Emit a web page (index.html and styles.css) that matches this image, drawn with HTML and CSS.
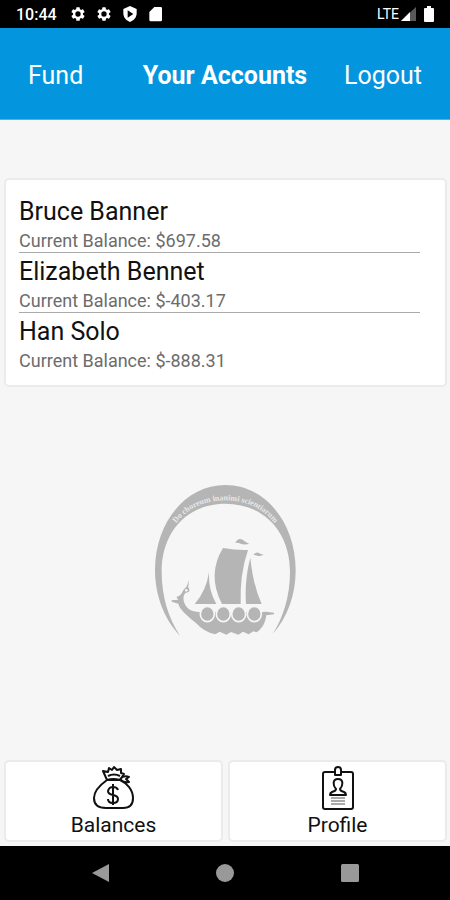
FILE: index.html
```html
<!DOCTYPE html>
<html lang="en">
<head>
<meta charset="utf-8">
<meta name="viewport" content="width=device-width, initial-scale=1">
<title>Your Accounts</title>
<link rel="stylesheet" href="styles.css">
</head>
<body>
<div class="statusbar">
  <span class="clock">10:44</span>
  <svg class="status-icon" viewBox="0 0 24 24"><path fill-rule="evenodd" d="M19.4 13a7.500 7.500 0 0 0 0-2l2.200-1.700a.5.5 0 0 0 .1-.7l-2-3.400a.5.5 0 0 0-.6-.2l-2.500 1a7.600 7.600 0 0 0-1.700-1l-.4-2.600a.5.5 0 0 0-.5-.4h-4a.5.5 0 0 0-.5.400L9.100 5a7.600 7.600 0 0 0-1.700 1l-2.500-1a.5.5 0 0 0-.6.200l-2 3.400a.5.5 0 0 0 .1.700L4.600 11a7.500 7.500 0 0 0 0 2l-2.200 1.700a.5.5 0 0 0-.1.700l2 3.400c.1.200.4.300.6.200l2.500-1a7.600 7.600 0 0 0 1.700 1l.4 2.600c0 .2.200.4.5.4h4c.3 0 .5-.2.500-.4l.4-2.600a7.600 7.600 0 0 0 1.700-1l2.500 1c.2.100.5 0 .6-.2l2-3.400a.5.5 0 0 0-.1-.7zM12 8a4 4 0 1 1 0 8 4 4 0 0 1 0-8z"/></svg>
  <svg class="status-icon" viewBox="0 0 24 24"><path fill-rule="evenodd" d="M19.4 13a7.500 7.500 0 0 0 0-2l2.200-1.700a.5.5 0 0 0 .1-.7l-2-3.400a.5.5 0 0 0-.6-.2l-2.500 1a7.600 7.600 0 0 0-1.700-1l-.4-2.600a.5.5 0 0 0-.5-.4h-4a.5.5 0 0 0-.5.400L9.100 5a7.600 7.600 0 0 0-1.700 1l-2.500-1a.5.5 0 0 0-.6.200l-2 3.400a.5.5 0 0 0 .1.700L4.600 11a7.500 7.500 0 0 0 0 2l-2.200 1.700a.5.5 0 0 0-.1.700l2 3.400c.1.200.4.300.6.200l2.500-1a7.600 7.600 0 0 0 1.700 1l.4 2.600c0 .2.200.4.5.4h4c.3 0 .5-.2.500-.4l.4-2.600a7.600 7.600 0 0 0 1.700-1l2.500 1c.2.100.5 0 .6-.2l2-3.400a.5.5 0 0 0-.1-.7zM12 8a4 4 0 1 1 0 8 4 4 0 0 1 0-8z"/></svg>
  <svg class="status-icon" viewBox="0 0 24 24"><path fill-rule="evenodd" d="M12 0 2 4.500V11c0 6 4.200 11 10 13 5.800-2 10-7 10-13V4.500zM8.500 6.500 17 12l-8.500 5.500z"/></svg>
  <svg class="status-icon" viewBox="0 0 24 24"><path d="M9.500 1.500H19a2 2 0 0 1 2 2V21a2 2 0 0 1-2 2H4a2 2 0 0 1-2-2V9z"/></svg>
  <span class="network">LTE</span>
  <svg class="signal" viewBox="0 0 15 14"><path d="M15 0v14H0z" opacity=".35"/><path d="M9 5v9H0z"/></svg>
  <svg class="battery" viewBox="0 0 10 16"><path d="M3 0h4v2h2a1 1 0 0 1 1 1v12a1 1 0 0 1-1 1H1a1 1 0 0 1-1-1V3a1 1 0 0 1 1-1h2z"/></svg>
</div>
<header class="topbar">
  <button class="topbar-button" type="button">Fund</button>
  <h1 class="title">Your Accounts</h1>
  <button class="topbar-button" type="button">Logout</button>
</header>
<main class="content">
  <ul class="panel accounts">
    <li class="account"><h2 class="name">Bruce Banner</h2><p class="balance">Current Balance: $697.58</p></li>
    <li class="account"><h2 class="name">Elizabeth Bennet</h2><p class="balance">Current Balance: $-403.17</p></li>
    <li class="account"><h2 class="name">Han Solo</h2><p class="balance">Current Balance: $-888.31</p></li>
  </ul>
  <div class="brand">
    <svg class="emblem" viewBox="0 0 480 510" role="img" aria-label="Viking ship emblem">
      <path d="M105 482C57 432 30 360 30 285 30 145 120 30 241 30s211 115 211 255c0 75-24 142-69 192 32-50 52-115 52-187 0-120-80-204-194-204S50 170 50 290c0 75 21 140 55 192z"/>
      <path id="motto-arc" fill="none" d="M75 174C106 114 162 76 241 76s135 38 166 98"/>
      <text class="motto" text-anchor="middle"><textPath href="#motto-arc" startOffset="50%">Do choreum inanimi scientiarum</textPath></text>
      <path d="M234 219q38 7 75 6-25 72-22 162h-56q-46-88 3-168z"/>
      <path d="M192 290q-3 54 22 97h-65q36-42 43-97zM316 248q8 82 34 139h-47q-5-72 13-139z"/>
      <path d="M271 204q8-18 23-9 9 8 19 12-18 3-26-1-8-4-16-2zM325 240q10-12 18-5 6 4 13 4-13 6-19 3-6-3-12-2z"/>
      <path d="M129 315Q133 328 129 336Q135 341 132 350L121 354C111 366 115 386 127 398Q138 409 160 411H350L364 410 387 413V418L364 421C361 444 352 460 335 472L325 469 311 478 294 470 280 479 258 471 244 479 224 470 211 478Q178 472 153 444C124 420 103 402 100 386L80 380V376L100 374 94 366Q110 361 113 349 118 340 124 336 130 328 129 315z"/>
      <circle class="light" cx="124" cy="346" r="4"/>
      <g class="shield"><ellipse cx="187" cy="417" rx="21" ry="23"/><ellipse cx="235" cy="417" rx="21" ry="23"/><ellipse cx="281" cy="417" rx="21" ry="23"/><ellipse cx="328" cy="417" rx="21" ry="23"/></g>
    </svg>
  </div>
</main>
<nav class="tabs" aria-label="Sections">
  <button class="panel tab" type="button">
    <svg class="tab-icon" viewBox="0 0 44 46"><path d="M15 15C8 20 2 26 2 33c0 7 5 10 12 10h17c7 0 10-4 10-10 0-8-6-15-13-18zM15 15l-4-9 5 1 1-4 3 2 2-3 3 3 4-1v4l3 1-4 6M16 11q6-3 12 0M15 15q6-2 13 0M28 14q4-4 9-2l-3 2 3 3q-5 1-8-2"/><path d="M26 25q-1-3-5-3t-5 4q0 3 5 4t5 4q0 4-5 4t-5-4M21 19v21"/></svg>
    <span>Balances</span>
  </button>
  <button class="panel tab" type="button">
    <svg class="tab-icon" viewBox="0 0 44 46"><path d="M19 7H9a2 2 0 0 0-2 2v33a2 2 0 0 0 2 2h26a2 2 0 0 0 2-2V9a2 2 0 0 0-2-2H25M19 10V5a3 3 0 0 1 6 0v5z"/><path d="M20 24c-3-3-4-10 2-10s5 7 2 10q0 2 4 3 2 1 2 3H14q0-2 2-3 4-1 4-3z"/><path class="fine" d="M15 33h14M15 36h14M15 39h14"/></svg>
    <span>Profile</span>
  </button>
</nav>
<div class="system-nav">
  <button type="button" aria-label="Back"><svg viewBox="0 0 20 20"><path d="M2 10 19 1v18z"/></svg></button>
  <button type="button" aria-label="Home"><svg viewBox="0 0 20 20"><circle cx="10" cy="10" r="9"/></svg></button>
  <button type="button" aria-label="Recent apps"><svg viewBox="0 0 20 20"><rect x="1" y="1" width="18" height="18" rx="1.500"/></svg></button>
</div>
</body>
</html>
```
FILE: styles.css
```css
* { box-sizing: border-box; }
body {
  margin: 0;
  min-height: 100vh;
  display: flex;
  flex-direction: column;
  background: #f6f6f6;
  color: #111;
  font-family: Roboto, sans-serif;
}
h1, h2, p, ul { margin: 0; padding: 0; }
button { font: inherit; color: inherit; border: 0; background: none; padding: 0; }

.statusbar {
  display: flex;
  align-items: center;
  gap: 10px;
  height: 28px;
  padding: 0 16px;
  background: #000;
  color: #fff;
  fill: #fff;
}
.clock { font-size: 16px; font-weight: 500; margin-right: 3px; }
.status-icon { width: 16px; height: 16px; }
.network { margin-left: auto; font-size: 14px; }
.signal { width: 15px; height: 14px; margin-left: -8px; }
.battery { width: 10px; height: 16px; margin-left: -2px; }

.topbar {
  display: grid;
  grid-template-columns: 1fr auto 1fr;
  align-items: center;
  height: 92px;
  padding: 4px 28px 0;
  background: #0396de;
  border-bottom: 1px solid #4eb2e3;
  color: #fff;
}
.topbar-button { font-size: 25px; justify-self: start; }
.topbar-button:last-child { justify-self: end; }
.title { font-size: 25px; font-weight: 700; }

.content { flex: 1; display: flex; flex-direction: column; }
.panel {
  background: #fff;
  border: 2px solid #ebebeb;
  border-radius: 5px;
}
.accounts {
  list-style: none;
  margin: 58px 3px 0 4px;
  padding: 12px 25px 13px 13px;
}
.account { height: 60px; padding-top: 2px; }
.account + .account { border-top: 1px solid #aaa; padding-top: 1px; }
.name { font-size: 25px; line-height: 36px; font-weight: 400; }
.balance { font-size: 18px; line-height: 22px; color: #6c6c6c; }

.brand {
  flex: 1;
  display: flex;
  align-items: center;
  justify-content: center;
  padding-bottom: 28px;
}
.emblem { width: 160px; height: 170px; fill: #b5b5b5; }
.emblem .motto { font: 700 24px "Liberation Serif", serif; fill: #e8e8e8; }
.emblem .light { fill: #f6f6f6; }
.shield { stroke: #f6f6f6; stroke-width: 5; }

.tabs { display: flex; gap: 5px; padding: 0 3px 4px 4px; }
.tab {
  flex: 1;
  display: flex;
  flex-direction: column;
  align-items: center;
  height: 82px;
  padding-top: 3px;
  font-size: 21px;
  line-height: 28px;
}
.tab-icon {
  width: 44px;
  height: 46px;
  fill: none;
  stroke: #111;
  stroke-width: 2;
  stroke-linejoin: round;
}
.tab-icon .fine { stroke: #555; stroke-width: 1; }

.system-nav {
  display: flex;
  align-items: center;
  justify-content: space-around;
  height: 54px;
  padding: 0 38px;
  background: #000;
}
.system-nav svg { display: block; width: 20px; height: 20px; fill: #999; }
```
